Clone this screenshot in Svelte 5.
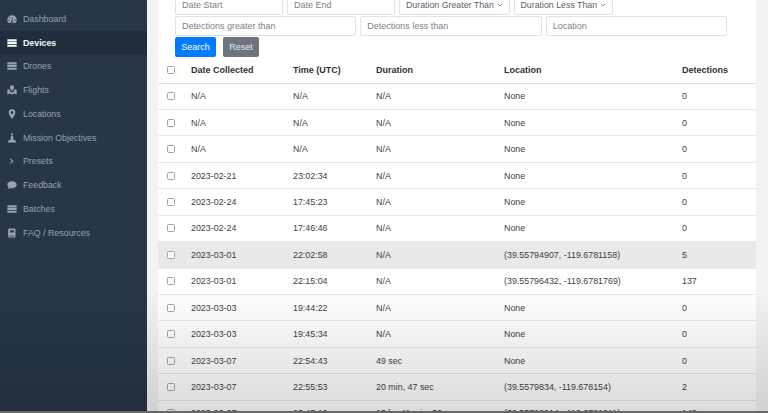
<script>
  const nav = [
    { label: 'Dashboard', icon: 'gauge' },
    { label: 'Devices', icon: 'list', active: true },
    { label: 'Drones', icon: 'list' },
    { label: 'Flights', icon: 'map' },
    { label: 'Locations', icon: 'pin' },
    { label: 'Mission Objectives', icon: 'person' },
    { label: 'Presets', icon: 'chevron' },
    { label: 'Feedback', icon: 'chat' },
    { label: 'Batches', icon: 'list' },
    { label: 'FAQ / Resources', icon: 'book' }
  ];

  const rows = [
    ['N/A', 'N/A', 'N/A', 'None', '0'],
    ['N/A', 'N/A', 'N/A', 'None', '0'],
    ['N/A', 'N/A', 'N/A', 'None', '0'],
    ['2023-02-21', '23:02:34', 'N/A', 'None', '0'],
    ['2023-02-24', '17:45:23', 'N/A', 'None', '0'],
    ['2023-02-24', '17:46:46', 'N/A', 'None', '0'],
    ['2023-03-01', '22:02:58', 'N/A', '(39.55794907, -119.6781158)', '5', true],
    ['2023-03-01', '22:15:04', 'N/A', '(39.55796432, -119.6781769)', '137'],
    ['2023-03-03', '19:44:22', 'N/A', 'None', '0'],
    ['2023-03-03', '19:45:34', 'N/A', 'None', '0'],
    ['2023-03-07', '22:54:43', '49 sec', 'None', '0'],
    ['2023-03-07', '22:55:53', '20 min, 47 sec', '(39.5579834, -119.678154)', '2'],
    ['2023-03-07', '23:47:19', '15 hr, 41 min, 59 sec', '(39.55798914, -119.6781811)', '148']
  ];
</script>

<div class="page">
  <aside class="sidebar">
    {#each nav as item}
      <div class="nav-item" class:active={item.active}>
        <svg class="icon" viewBox="0 0 16 16" fill="currentColor">
          {#if item.icon === 'gauge'}
            <path d="M8 2a7.500 7.500 0 0 0-7.500 7.500c0 1.600.5 3.100 1.300 4.300h12.400c.8-1.200 1.300-2.700 1.300-4.300A7.500 7.500 0 0 0 8 2zM7 11l1.800-5.200 1 .3L8.700 11.200a1.300 1.300 0 1 1-1.700-.2zM3 8.700a1 1 0 1 1 0 2 1 1 0 0 1 0-2zM4.700 4.800a1 1 0 1 1 0 2 1 1 0 0 1 0-2zM13 8.700a1 1 0 1 1 0 2 1 1 0 0 1 0-2z" fill-rule="evenodd" />
          {:else if item.icon === 'list'}
            <path d="M.5 2h15v3.400H.5zM.5 6.300h15v3.400H.5zM.5 10.600h15V14H.5z" />
          {:else if item.icon === 'map'}
            <path d="M8 .5a3.300 3.300 0 0 0-3.300 3.300C4.700 5.600 8 9.500 8 9.500s3.300-3.900 3.300-5.700A3.300 3.300 0 0 0 8 .5zM.5 7.500l3.300-1.200 1 3.700 3.200 2.300L11.200 10l1-3.700 3.300 1.200v7.500l-4-1.300-3.500 1.300-3.500-1.300-4 1.300z" />
          {:else if item.icon === 'pin'}
            <path d="M8 .5a5.300 5.300 0 0 0-5.300 5.300C2.700 9.300 8 15.500 8 15.500s5.300-6.200 5.300-9.700A5.300 5.300 0 0 0 8 .5zm0 7.300a2.100 2.100 0 1 1 0-4.200 2.100 2.100 0 0 1 0 4.200z" fill-rule="evenodd" />
          {:else if item.icon === 'person'}
            <path d="M8 .5a1.700 1.700 0 1 1 0 3.400A1.700 1.700 0 0 1 8 .5zM6.300 4.800h3.400l.8 6.200H13l2 4H1l2-4h2.500z" />
          {:else if item.icon === 'chevron'}
            <path d="M5.800 3.500l4.500 4.500-4.500 4.500-1.300-1.300L7.700 8 4.500 4.800z" />
          {:else if item.icon === 'chat'}
            <path d="M8 2c4.200 0 7.500 2.500 7.500 5.500S12.200 13 8 13c-1 0-1.900-.1-2.700-.4C4.300 13.400 2.800 14 1 14c.8-.8 1.300-1.800 1.500-2.800C1.300 10.200.5 8.900.5 7.500.5 4.500 3.800 2 8 2z" />
          {:else}
            <path d="M3 .8h10.500v14.400H3A1.500 1.500 0 0 1 1.800 13.700V2.300A1.500 1.500 0 0 1 3 .8zM5 3.500v3.500h6V3.500zM3.500 12.200v1.300h8.500v-1.300z" fill-rule="evenodd" />
          {/if}
        </svg>
        <span>{item.label}</span>
      </div>
    {/each}
  </aside>

  <main class="content">
    <div class="card">
      <form class="filters">
        <div class="filter-row first">
          <div class="field date">Date Start</div>
          <div class="field date">Date End</div>
          <div class="field select wide">Duration Greater Than
            <svg viewBox="0 0 10 6"><path d="M1.500 1.500L5 4.500l3.500-3" /></svg>
          </div>
          <div class="field select">Duration Less Than
            <svg viewBox="0 0 10 6"><path d="M1.500 1.500L5 4.500l3.500-3" /></svg>
          </div>
        </div>
        <div class="filter-row second">
          <div class="field grow">Detections greater than</div>
          <div class="field grow">Detections less than</div>
          <div class="field grow">Location</div>
        </div>
        <div class="buttons">
          <button type="button" class="btn primary">Search</button>
          <button type="button" class="btn secondary">Reset</button>
        </div>
      </form>

      <table>
        <thead>
          <tr>
            <th class="check"><span class="box"></span></th>
            <th class="c-date">Date Collected</th>
            <th class="c-time">Time (UTC)</th>
            <th class="c-dur">Duration</th>
            <th class="c-loc">Location</th>
            <th>Detections</th>
          </tr>
        </thead>
        <tbody>
          {#each rows as row}
            <tr class:hover={row[5]}>
              <td class="check"><span class="box"></span></td>
              <td>{row[0]}</td>
              <td>{row[1]}</td>
              <td>{row[2]}</td>
              <td>{row[3]}</td>
              <td>{row[4]}</td>
            </tr>
          {/each}
        </tbody>
      </table>
    </div>
  </main>

  <!-- video player shading along the bottom of the frame -->
  <div class="shade"></div>
</div>

<style>
  :global(body) {
    margin: 0;
    overflow: hidden;
  }

  .page {
    position: relative;
    display: flex;
    width: 768px;
    height: 413px;
    overflow: hidden;
    background: #f1f3f5;
    font-family: "Liberation Sans", Arial, sans-serif;
    font-size: 9px;
    color: #3a3f44;
  }

  .sidebar {
    flex: none;
    width: 147px;
    padding-top: 7px;
    box-sizing: border-box;
    background: #283648;
    color: #97a3af;
  }

  .nav-item {
    display: flex;
    align-items: center;
    gap: 6.5px;
    height: 23.75px;
    padding-left: 6.5px;
    font-size: 8.8px;
  }

  .nav-item.active {
    background: #212d3c;
    color: #f4f6f8;
    font-weight: bold;
  }

  .icon {
    flex: none;
    width: 10px;
    height: 10px;
  }

  .content {
    flex: 1;
    min-width: 0;
    padding: 0 12px 0 11px;
  }

  .card {
    height: 100%;
    background: #fff;
  }

  .filters {
    padding-left: 17px;
  }

  .filter-row {
    display: flex;
    gap: 4px;
  }

  .filter-row.first {
    height: 15px;
    align-items: flex-end;
  }

  .filter-row.second {
    width: 552px;
    height: 21px;
    padding-top: 0.5px;
  }

  .field {
    display: flex;
    align-items: center;
    justify-content: space-between;
    box-sizing: border-box;
    height: 20px;
    padding: 0 6px;
    border: 1px solid #dfe3e6;
    border-radius: 2px;
    background: #fff;
    color: #7b8287;
    white-space: nowrap;
  }

  .date {
    width: 108px;
  }

  .select {
    width: 99px;
    color: #5a6066;
    font-size: 8.8px;
  }

  .wide {
    width: 110.5px;
  }

  .select svg {
    width: 6px;
    height: 4px;
    fill: none;
    stroke: #5a6066;
    stroke-width: 1.2;
  }

  .grow {
    flex: 1;
  }

  .buttons {
    display: flex;
    gap: 7px;
  }

  .btn {
    height: 20px;
    padding: 0;
    border: 0;
    border-radius: 2px;
    font: 9px "Liberation Sans", Arial, sans-serif;
  }

  .primary {
    width: 41px;
    background: #007bff;
    color: #fff;
  }

  .secondary {
    width: 36px;
    background: #6c757d;
    color: #e8eaec;
  }

  table {
    width: 100%;
    border-collapse: collapse;
    table-layout: fixed;
  }

  th {
    height: 26px;
    padding: 0;
    text-align: left;
    font-size: 9px;
    font-weight: bold;
    color: #2d3236;
    border-bottom: 1px solid #dee2e6;
  }

  td {
    height: 25.45px;
    padding: 0;
    font-size: 8.9px;
    border-bottom: 1px solid #e6e8ea;
  }

  .check {
    width: 33px;
    padding-right: 7px;
    box-sizing: border-box;
  }

  .c-date {
    width: 102px;
  }

  .c-time {
    width: 83px;
  }

  .c-dur {
    width: 128px;
  }

  .c-loc {
    width: 178px;
  }

  .box {
    display: block;
    width: 6px;
    height: 6px;
    margin: 0 auto;
    border: 1px solid #a0a4a8;
    border-radius: 1.5px;
    background: #fff;
  }

  tr.hover td {
    background: #e9e9e9;
  }

  .shade {
    position: absolute;
    left: 0;
    right: 0;
    bottom: 0;
    height: 125px;
    pointer-events: none;
    background: linear-gradient(to bottom, rgba(0, 0, 0, 0), rgba(0, 0, 0, 0.14));
    border-bottom: 2px solid #666;
    box-sizing: border-box;
  }
</style>
